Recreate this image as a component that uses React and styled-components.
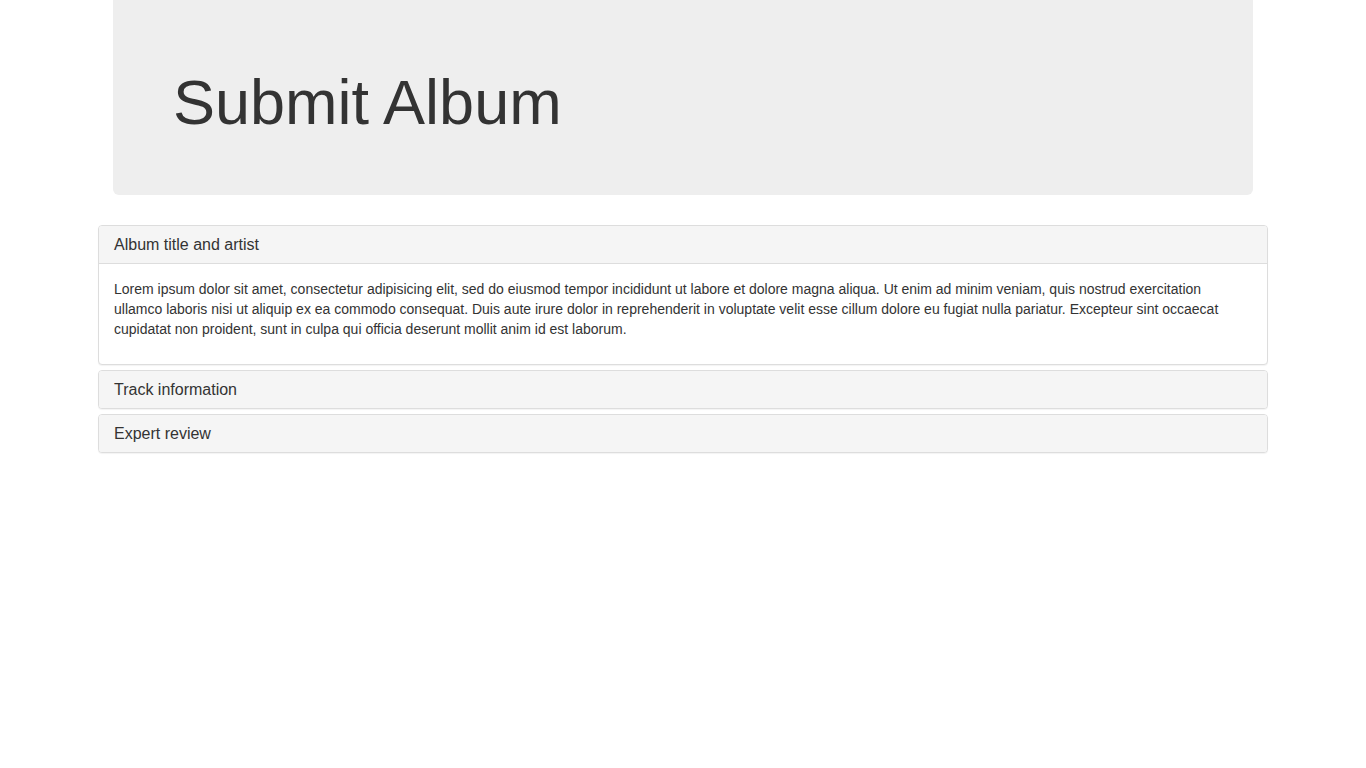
import React from "react";
import styled, { createGlobalStyle } from "styled-components";

const GlobalStyle = createGlobalStyle`
    body {
        margin: 0;
        font-family: "Liberation Sans", Arial, sans-serif;
        font-size: 14px;
        line-height: 1.42857143;
        color: #333;
        background: #fff;
    }
`

const sections = [
    {
        title: "Album title and artist",
        open: true,
        body: "Lorem ipsum dolor sit amet, consectetur adipisicing elit, sed do eiusmod tempor incididunt ut labore et dolore magna aliqua. Ut enim ad minim veniam, quis nostrud exercitation ullamco laboris nisi ut aliquip ex ea commodo consequat. Duis aute irure dolor in reprehenderit in voluptate velit esse cillum dolore eu fugiat nulla pariatur. Excepteur sint occaecat cupidatat non proident, sunt in culpa qui officia deserunt mollit anim id est laborum."
    },
    { title: "Track information", open: false },
    { title: "Expert review", open: false }
]

const App = () => {
    return (
        <>
            <GlobalStyle />
            <Container>
                <Jumbotron>
                    <Heading>Submit Album</Heading>
                </Jumbotron>
                <PanelGroup>
                    {sections.map(item => {
                        return (
                            <Panel key={item.title}>
                                <PanelHeading $open={item.open}>
                                    <PanelTitle>{item.title}</PanelTitle>
                                </PanelHeading>
                                {item.open ?
                                    <PanelBody>
                                        <Text>{item.body}</Text>
                                    </PanelBody>
                                    : null
                                }
                            </Panel>
                        )
                    })}
                </PanelGroup>
            </Container>
        </>
    )
}

const Container = styled.div`
    width: 1170px;
    margin: 0 auto;
`

const Jumbotron = styled.div`
    margin: 0 15px 30px;
    padding: 48px 60px;
    background-color: #eee;
    border-radius: 0 0 6px 6px;
`

const Heading = styled.h1`
    margin: 20px 0 10px;
    font-size: 63px;
    font-weight: 500;
    line-height: 1.1;
    color: #333;
`
////////////////

const PanelGroup = styled.div`
    display: flex;
    flex-direction: column;
    gap: 5px;
    margin-bottom: 20px;
`

const Panel = styled.div`
    background-color: #fff;
    border: 1px solid #ddd;
    border-radius: 4px;
    box-shadow: 0 1px 1px rgba(0, 0, 0, 0.05);
    overflow: hidden;
`

const PanelHeading = styled.div`
    padding: 10px 15px;
    background-color: #f5f5f5;
    border-bottom: ${p => (p.$open ? "1px solid #ddd" : "none")};
`

const PanelTitle = styled.h4`
    margin: 0;
    font-size: 16px;
    font-weight: 500;
    line-height: 17px;
    color: #333;
`

const PanelBody = styled.div`
    padding: 15px;
`

const Text = styled.p`
    margin: 0 0 10px;
`

export default App
